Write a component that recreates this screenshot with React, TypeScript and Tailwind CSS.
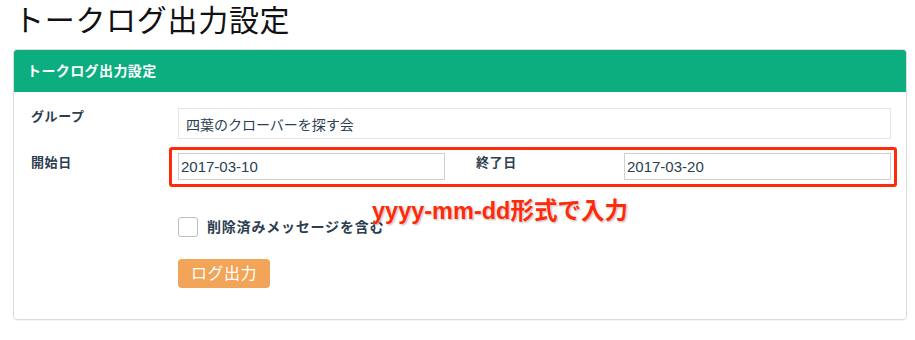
import React from "react";

const FONT = "font-['Liberation_Sans','Noto_Sans_CJK_JP',sans-serif]";

export default function App() {
  return (
    <div className={`w-[915px] h-[340px] bg-white overflow-hidden ${FONT}`}>
      <h1 className="ml-[14px] pt-[3px] text-[30px] leading-[36px] tracking-[0.7px] text-[#111]">
        トークログ出力設定
      </h1>

      <div className="ml-[13px] mt-[10px] w-[894px] h-[271px] border border-[#dcdcdc] rounded-[4px] shadow-[0_1px_1px_rgba(0,0,0,0.05)]">
        <div className="h-[42px] bg-[#0cad7f] rounded-t-[3px] flex items-center pl-[13px] text-white text-[14px] font-bold tracking-[0.4px]">
          トークログ出力設定
        </div>

        <div className="relative pt-[16px] pl-[17px] pr-[15px]">
          {/* group */}
          <div className="flex">
            <label className="w-[147px] text-[13px] leading-[18px] font-bold tracking-[0.6px] text-[#2c3e50]">
              グループ
            </label>
            <input
              readOnly
              value="四葉のクローバーを探す会"
              className="flex-1 h-[31px] border border-[#e6e6e6] px-[7px] text-[14px] text-[#2c3e50] outline-none"
            />
          </div>

          {/* dates */}
          <div className="flex mt-[14px]">
            <label className="w-[147px] text-[13px] leading-[20px] font-bold tracking-[0.6px] text-[#2c3e50]">
              開始日
            </label>
            <input
              readOnly
              value="2017-03-10"
              className="w-[267px] h-[27px] border border-[#cfcfcf] pl-[2px] text-[15px] text-[#2c3e50] outline-none"
            />
            <label className="ml-[31px] w-[148px] text-[13px] leading-[20px] font-bold tracking-[0.6px] text-[#2c3e50]">
              終了日
            </label>
            <input
              readOnly
              value="2017-03-20"
              className="w-[267px] h-[27px] border border-[#cfcfcf] pl-[2px] text-[15px] text-[#2c3e50] outline-none"
            />
          </div>

          {/* checkbox */}
          <div className="flex items-center mt-[37px] ml-[147px]">
            <span className="w-[20px] h-[20px] border border-[#bdbdbd] rounded-[3px] bg-white" />
            <span className="ml-[9px] text-[14px] leading-[20px] font-bold tracking-[0.8px] text-[#2c3e50]">
              削除済みメッセージを含む
            </span>
          </div>

          {/* button */}
          <button className="mt-[22px] ml-[147px] w-[92px] h-[29px] bg-[#f2a458] rounded-[4px] text-white text-[16px] tracking-[0.5px]">
            ログ出力
          </button>

          {/* annotation overlay */}
          <div className="absolute left-[155px] top-[55px] w-[728px] h-[40px] border-[3px] border-[#ff2a0a] rounded-[3px]" />
          <div className="absolute left-[358px] top-[104px] text-[23.5px] leading-[30px] font-bold text-[#ff2a0a] whitespace-nowrap [text-shadow:0_0_2px_#fff,1px_1px_2px_rgba(0,0,0,0.35)]">
            yyyy-mm-dd形式で入力
          </div>
        </div>
      </div>
    </div>
  );
}
